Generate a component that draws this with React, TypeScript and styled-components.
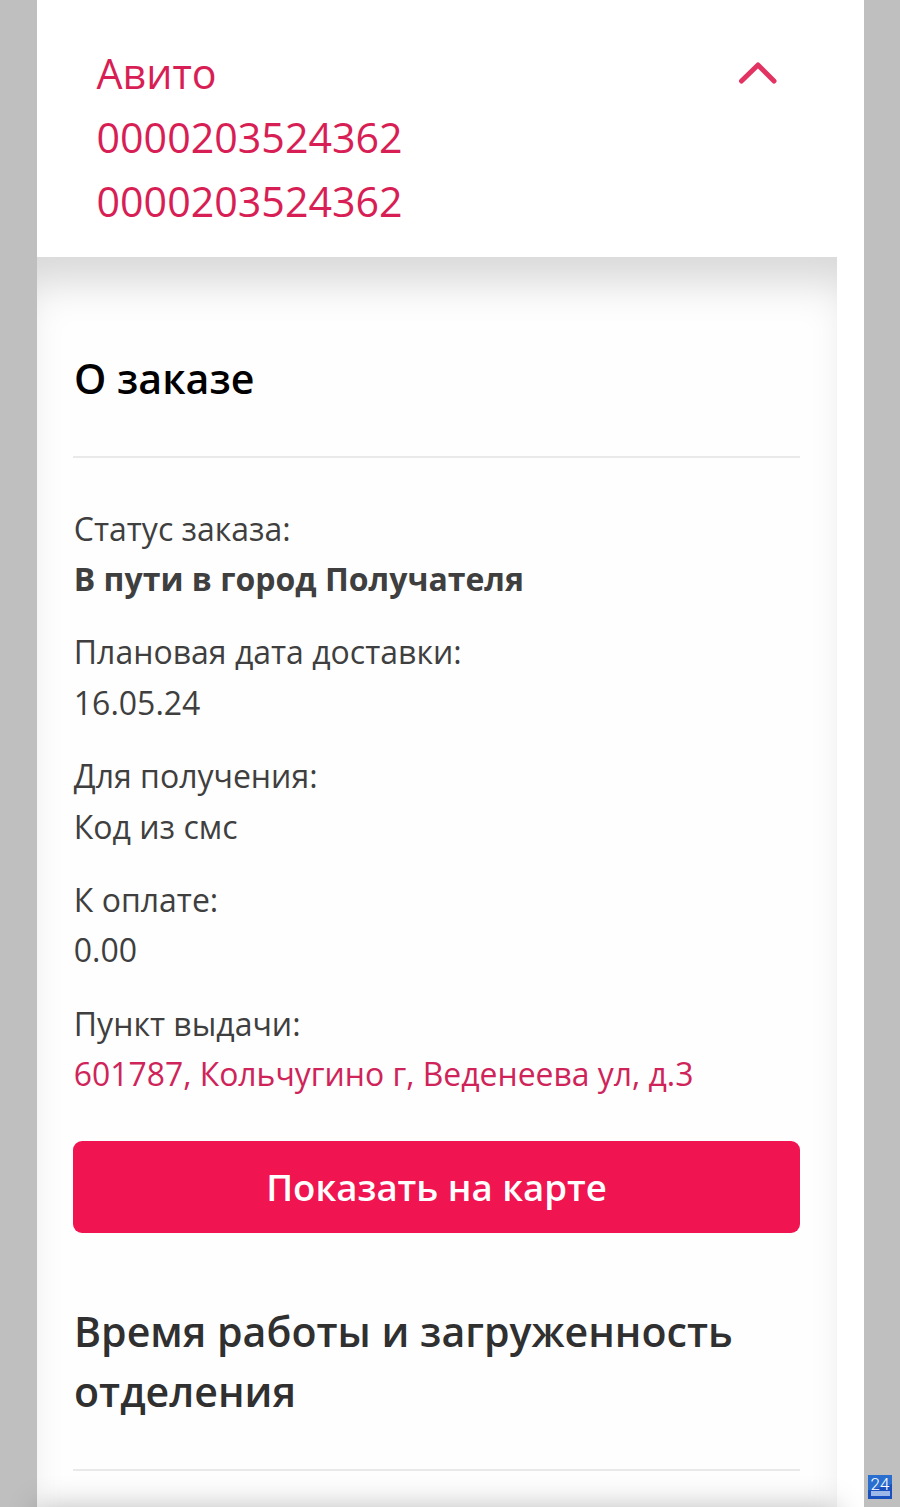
import React from 'react';
import styled, { createGlobalStyle } from 'styled-components';

const Global = createGlobalStyle`
  * { box-sizing: border-box; }
  body { margin: 0; background: #bfbfbf; font-family: "Open Sans", "Noto Sans", sans-serif; color: #3f3f3f; }
  h2, p { margin: 0; }
`;

const Page = styled.main`
  position: relative;
  height: 1507px;
  overflow: hidden;
  padding-left: 37px;
`;
const Sheet = styled.div`
  width: 827px;
  height: 1507px;
  background: #fff;
`;
const Header = styled.header`
  display: flex;
  justify-content: space-between;
  height: 257px;
  padding: 41px 87px 0 59.5px;
  color: #d81f55;
  font-size: 41.2px;
  line-height: 64.2px;
`;
const Chevron = styled.svg`
  width: 40px;
  height: 26px;
  margin-top: 18.5px;
`;
const Panel = styled.section`
  width: 800px;
  height: 1250px;
  padding: 91px 37px 0 36px;
  background: #fefefe;
  box-shadow: inset 0 40px 40px -14px rgba(0, 0, 0, 0.15);
`;
const NextCard = styled.div`
  width: 800px;
  height: 40px;
  box-shadow: 0 0 30px rgba(0, 0, 0, 0.26);
`;
const Title = styled.h2<{ $color: string; $gap?: number }>`
  margin-top: ${p => p.$gap ?? 0}px;
  padding-left: 1px;
  color: ${p => p.$color};
  font-size: 41.1px;
  font-weight: 600;
  line-height: 60px;
`;
const Divider = styled.hr<{ $gap: number }>`
  height: 2px;
  margin: ${p => p.$gap}px 0 0;
  border: 0;
  background: #e9e9e9;
`;
const Details = styled.div`
  display: grid;
  gap: 23px;
  margin-top: 45.6px;
  padding-left: 0.8px;
`;
const Field = styled.p`
  font-size: 32px;
  line-height: 50.4px;
  white-space: nowrap;
`;
const Value = styled.span<{ $tone?: 'bold' | 'link' }>`
  display: block;
  font-size: ${p => (p.$tone === 'link' ? 31.9 : 32)}px;
  font-weight: ${p => (p.$tone === 'bold' ? 700 : 400)};
  color: ${p => (p.$tone === 'link' ? '#cf2459' : 'inherit')};
`;
const MapButton = styled.button`
  display: block;
  width: 100%;
  height: 92px;
  margin-top: 41.4px;
  padding: 0;
  border: 0;
  border-radius: 9px;
  background: #f01450;
  color: #fff;
  font: 600 36.6px/91px "Open Sans", sans-serif;
`;
const Badge = styled.div`
  position: absolute;
  left: 868px;
  top: 1475px;
  width: 24px;
  height: 24px;
  background: linear-gradient(165deg, #2a6fd0 50%, #1a50bd 52%);
  color: #fff;
  font: 300 17px/18px Roboto, "Liberation Sans", sans-serif;
  text-align: center;
`;
const BadgeBar = styled.div`
  width: 19px;
  height: 5px;
  margin: -2px auto 0;
  background: #9db8e8;
`;

const fields: { label: string; value: string; tone?: 'bold' | 'link' }[] = [
  { label: 'Статус заказа:', value: 'В пути в город Получателя', tone: 'bold' },
  { label: 'Плановая дата доставки:', value: '16.05.24' },
  { label: 'Для получения:', value: 'Код из смс' },
  { label: 'К оплате:', value: '0.00' },
  { label: 'Пункт выдачи:', value: '601787, Кольчугино г, Веденеева ул, д.3', tone: 'link' },
];

export default function App() {
  return (
    <Page>
      <Global />
      <Sheet>
        <Header>
          <div>Авито<br />0000203524362<br />0000203524362</div>
          <Chevron viewBox="0 0 40 26" fill="none" stroke="#e23362" strokeWidth="5" strokeLinecap="round" strokeLinejoin="round">
            <path d="M4.5 21 21 5 37 21" />
          </Chevron>
        </Header>
        <Panel>
          <Title $color="#000">О заказе</Title>
          <Divider $gap={48} />
          <Details>
            {fields.map(f => (
              <Field key={f.label}>{f.label}<Value $tone={f.tone}>{f.value}</Value></Field>
            ))}
          </Details>
          <MapButton>Показать на карте</MapButton>
          <Title $color="#303030" $gap={67.5}>Время работы и загруженность отделения</Title>
          <Divider $gap={48.5} />
        </Panel>
        <NextCard />
      </Sheet>
      <Badge>24<BadgeBar /></Badge>
    </Page>
  );
}
